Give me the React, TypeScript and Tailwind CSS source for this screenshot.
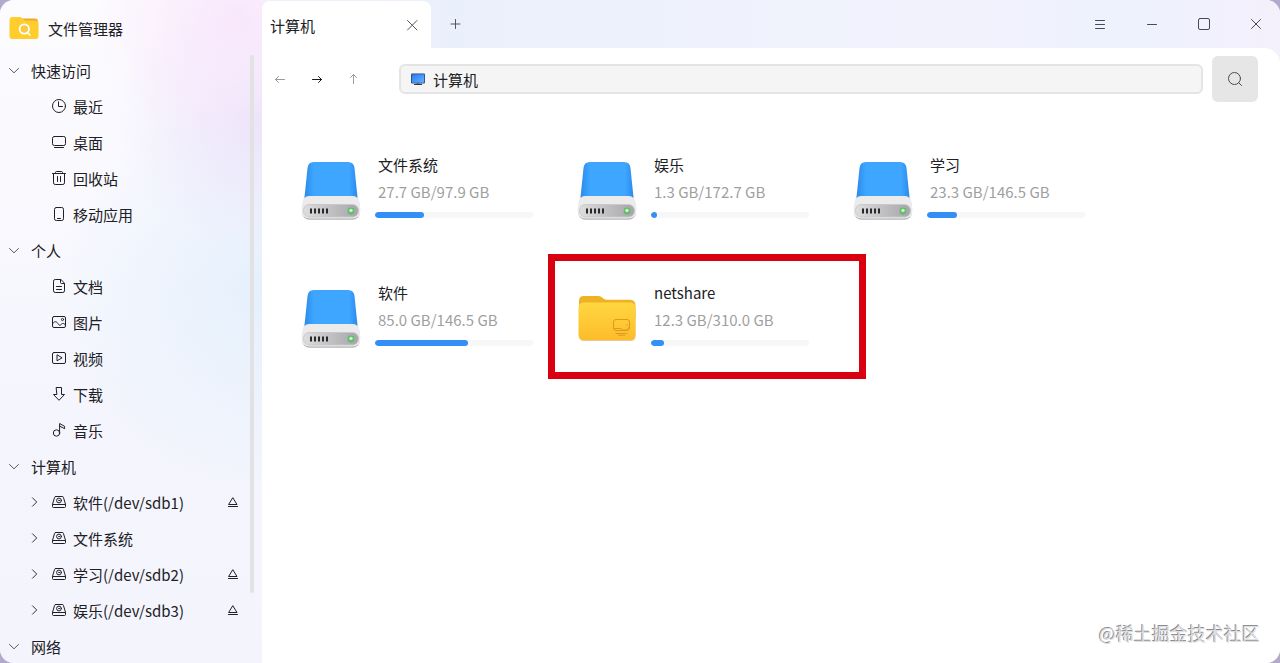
import React from "react";

function Glyph({ children, className = "" }: { children: React.ReactNode; className?: string }) {
  return (
    <svg
      aria-hidden="true"
      viewBox="0 0 16 16"
      className={`size-4 shrink-0 ${className}`}
      fill="none"
      stroke="currentColor"
      strokeWidth="1"
      strokeLinecap="round"
      strokeLinejoin="round"
    >
      {children}
    </svg>
  );
}

const ChevronDown = () => (
  <Glyph className="text-[#5c5c66]">
    <path d="M3.5 6.5 8 10.8 12.5 6.5" />
  </Glyph>
);
const ChevronRight = () => (
  <Glyph className="text-[#33333b]">
    <path d="M6.5 3.8 10.7 8 6.5 12.2" />
  </Glyph>
);
const Clock = () => (
  <Glyph>
    <circle cx="8" cy="8" r="6.5" />
    <path d="M7.5 3.8V8.5H11.5" />
  </Glyph>
);
const Desktop = () => (
  <Glyph>
    <rect x="1.5" y="2.5" width="13" height="9" rx="1.8" />
    <path d="M3.5 13.5h9" />
  </Glyph>
);
const Trash = () => (
  <Glyph>
    <path d="M1.5 3.5h13M4.5 3.5v-1a1 1 0 0 1 1-1h5a1 1 0 0 1 1 1v1M2.5 3.5v9.3a1.7 1.7 0 0 0 1.7 1.7h7.6a1.7 1.7 0 0 0 1.7-1.7V3.5M6.5 6.5v5M9.5 6.5v5" />
  </Glyph>
);
const Phone = () => (
  <Glyph>
    <rect x="3.5" y="1.5" width="9" height="13" rx="1.8" />
    <path d="M6.5 12.5h3" />
  </Glyph>
);
const Doc = () => (
  <Glyph>
    <path d="M9.5 1.5H4.2a1.7 1.7 0 0 0-1.7 1.7v9.6a1.7 1.7 0 0 0 1.7 1.7h7.6a1.7 1.7 0 0 0 1.7-1.7V5.5ZM9.5 1.8v2.7a1 1 0 0 0 1 1h2.7M5.5 8.5h5M5.5 11.5h5" />
  </Glyph>
);
const Picture = () => (
  <Glyph>
    <rect x="1.5" y="2.5" width="13" height="11" rx="1.5" />
    <circle cx="11.5" cy="5.5" r="1.1" />
    <path d="M1.8 9.5C3.5 7 5.3 7.2 6.8 9.4s2 2.3 3.2 1.2 2.8-2.2 4.3.4" />
  </Glyph>
);
const Video = () => (
  <Glyph>
    <rect x="1.5" y="2.5" width="13" height="11" rx="1.5" />
    <path d="M6 5.2v5.600L10.8 8Z" />
  </Glyph>
);
const Download = () => (
  <Glyph>
    <path d="M5.5 1.5h5v7h3L8 14.3 2.5 8.5h3Z" />
  </Glyph>
);
const Music = () => (
  <Glyph>
    <circle cx="5.5" cy="11" r="3.2" />
    <path d="M8.6 11V1.5l5 2.8v2.4l-5-2.6" />
  </Glyph>
);
const Disk = () => (
  <Glyph>
    <path d="M4.6 2.5h6.8a1 1 0 0 1 1 .8l2.100 7v2.2a1 1 0 0 1-1 1h-11a1 1 0 0 1-1-1v-2.2l2.100-7a1 1 0 0 1 1-.8ZM1.8 10.5h12.4" />
    <circle cx="8" cy="6.5" r="2.4" />
    <circle cx="8" cy="6.5" r=".3" />
  </Glyph>
);
const Eject = () => (
  <Glyph>
    <path d="M8 4 12 10.5H4ZM3.5 12.5h9" />
  </Glyph>
);

function AppLogo() {
  return (
    <svg aria-hidden="true" viewBox="0 0 30 24" className="h-6 w-[30px] shrink-0">
      <path d="M10 2.5h16a3 3 0 0 1 3 3V12H8Z" fill="#eda92e" />
      <path d="M.5 4a3 3 0 0 1 3-3h7c1.5 0 2 .5 3 1.6 1.5 1.6 2 2 4 2h9a3 3 0 0 1 3 3V20a3 3 0 0 1-3 3h-23a3 3 0 0 1-3-3Z" fill="#ffcd2c" />
      <circle cx="15.3" cy="13" r="4.7" fill="#fbc93f" stroke="#fff" strokeWidth="1.8" />
      <path d="m18.5 16.5 2.3 2.5" stroke="#fff" strokeWidth="1.8" strokeLinecap="round" />
    </svg>
  );
}

function DriveArt() {
  return (
    <svg aria-hidden="true" viewBox="0 0 60 60" className="size-[60px] shrink-0">
      <defs>
        <linearGradient id="drive-top" x1="0" x2="1" y1="0" y2="0">
          <stop offset="0" stopColor="#2a8ae8" />
          <stop offset=".08" stopColor="#3297f5" />
          <stop offset=".18" stopColor="#3fa6ff" />
          <stop offset=".84" stopColor="#3fa6ff" />
          <stop offset=".93" stopColor="#3297f5" />
          <stop offset="1" stopColor="#2a8ae8" />
        </linearGradient>
        <linearGradient id="drive-front" x1="0" x2="1" y1="0" y2="0">
          <stop offset="0" stopColor="#dededf" />
          <stop offset=".45" stopColor="#c3c3c5" />
          <stop offset="1" stopColor="#a5a6aa" />
        </linearGradient>
      </defs>
      <rect x="1" y="44" width="58" height="15.8" rx="7.5" fill="#b4b4b6" />
      <path d="M5.5 20 3 37Q.5 44 .5 50q0 8.5 8.5 8.5h42q8.500 0 8.500-8.500 0-6-2.500-13L54.500 20Z" fill="#ebebec" />
      <path d="M6.500 8Q7 2 13 2h34q6 0 6.500 6L56.500 38q-1.500-2-4.500-2H8q-3 0-4.500 2Z" fill="url(#drive-top)" />
      <rect x="2.500" y="44.500" width="55" height="12.500" rx="6" fill="url(#drive-front)" stroke="#c9c9cb" />
      <path d="M10 48.500v5M14 48.500v5M18 48.500v5M22 48.500v5M26 48.500v5" stroke="#29292b" strokeWidth="2" />
      <circle cx="50" cy="51" r="3.400" fill="#62b968" />
      <circle cx="50" cy="50.500" r="1.800" fill="#c4f9bf" />
    </svg>
  );
}

function FolderArt() {
  return (
    <svg aria-hidden="true" viewBox="0 0 60 60" className="size-[60px] shrink-0">
      <defs>
        <linearGradient id="folder-face" x1="0" x2="0" y1="0" y2="1">
          <stop offset="0" stopColor="#ffd740" />
          <stop offset="1" stopColor="#fdbc2b" />
        </linearGradient>
      </defs>
      <path d="M2 13Q2 8 7 8h14.500c3.500 0 4.500 3.700 8 3.700H53q5.500 0 5.500 6V30H2Z" fill="#efb125" />
      <rect x="2" y="20" width="56.500" height="33" rx="4.500" fill="#c9923a" opacity=".5" />
      <rect x="1.500" y="14.500" width="57" height="37.500" rx="5" fill="url(#folder-face)" />
      <g fill="none" stroke="#dd9a1c" strokeWidth="1">
        <rect x="36.500" y="31.500" width="16" height="11" rx="2.500" />
        <path d="M37 40.500h7l1.500 1.500h4l3-3M49.500 37h1.500M38.500 45.500h12M41 47.200h7" />
      </g>
    </svg>
  );
}

function MonitorArt() {
  return (
    <svg aria-hidden="true" viewBox="0 0 16 16" className="size-4 shrink-0">
      <defs>
        <linearGradient id="monitor-face" x1="0" x2="1" y1="0" y2="1">
          <stop offset="0" stopColor="#2878f5" />
          <stop offset="1" stopColor="#63b4ff" />
        </linearGradient>
      </defs>
      <rect x="1" y="2.500" width="14" height="10" rx="1" fill="#28466f" />
      <rect x="1.800" y="3.300" width="12.400" height="8.400" fill="url(#monitor-face)" />
      <path d="M6.500 12.500h3v.6H12v1H4v-1h2.500Z" fill="#32343b" />
    </svg>
  );
}

type Item = { label: string; Icon: React.ComponentType; drive?: boolean; eject?: boolean };
const groups: { label: string; items: Item[] }[] = [
  {
    label: "快速访问",
    items: [
      { label: "最近", Icon: Clock },
      { label: "桌面", Icon: Desktop },
      { label: "回收站", Icon: Trash },
      { label: "移动应用", Icon: Phone },
    ],
  },
  {
    label: "个人",
    items: [
      { label: "文档", Icon: Doc },
      { label: "图片", Icon: Picture },
      { label: "视频", Icon: Video },
      { label: "下载", Icon: Download },
      { label: "音乐", Icon: Music },
    ],
  },
  {
    label: "计算机",
    items: [
      { label: "软件(/dev/sdb1)", Icon: Disk, drive: true, eject: true },
      { label: "文件系统", Icon: Disk, drive: true },
      { label: "学习(/dev/sdb2)", Icon: Disk, drive: true, eject: true },
      { label: "娱乐(/dev/sdb3)", Icon: Disk, drive: true, eject: true },
    ],
  },
  { label: "网络", items: [] },
];

function Sidebar() {
  return (
    <aside className="flex w-[262px] shrink-0 flex-col overflow-hidden bg-[radial-gradient(ellipse_140px_130px_at_235px_20px,#f9e7fc_0%,#f9e7fc00_100%),radial-gradient(ellipse_150px_130px_at_262px_120px,#ebe3fa_0%,#ebe3fa00_100%),radial-gradient(ellipse_200px_200px_at_262px_290px,#e5f0fc_0%,#e5f0fc00_100%),linear-gradient(to_bottom,#fcfbfe_0%,#f9f9fe_30%,#f4f5fd_60%,#f4f4fd_100%)]">
      <div className="flex h-[52px] shrink-0 items-center gap-[9px] pt-1 pl-[9px]">
        <AppLogo />
        <h1 className="pt-0.5">文件管理器</h1>
      </div>
      <div className="relative min-h-0 flex-1 overflow-hidden">
        <nav aria-label="位置">
          {groups.map((group) => (
            <section key={group.label}>
              <button type="button" className="flex h-9 w-full items-center gap-[9px] pl-1.5 text-left">
                <ChevronDown />
                <span className="pt-0.5">{group.label}</span>
              </button>
              <ul>
                {group.items.map(({ label, Icon, drive, eject }) => (
                  <li key={label} className="flex h-9 items-center pr-[21px] pl-[26px]">
                    <span className="flex w-[25px] shrink-0">
                      {drive && (
                        <button type="button" aria-label={`展开 ${label}`}>
                          <ChevronRight />
                        </button>
                      )}
                    </span>
                    <a href="#" className="flex flex-1 items-center gap-1.5">
                      <Icon />
                      <span className="pt-0.5">{label}</span>
                    </a>
                    {eject && (
                      <button type="button" aria-label={`弹出 ${label}`}>
                        <Eject />
                      </button>
                    )}
                  </li>
                ))}
              </ul>
            </section>
          ))}
        </nav>
        <div className="absolute top-[3px] right-2 bottom-[70px] w-1 rounded-full bg-[#e2e2e5]" />
      </div>
    </aside>
  );
}

function TitleBar() {
  return (
    <header className="flex h-12 shrink-0 justify-between bg-[linear-gradient(to_right,#f3effc_0%,#eaf0fb_18%,#eff2fc_45%,#f2f2fd_70%,#edf2fd_85%,#f4f0fc_100%)]">
      <div className="flex">
        <div className="mt-px flex w-[169px] items-center justify-between rounded-t-lg bg-white pr-[11px] pl-2">
          <span className="pt-0.5">计算机</span>
          <button type="button" aria-label="关闭标签页" className="text-[#55555c]">
            <Glyph>
              <path d="m3.500 3.500 9.500 9.500M13 3.500 3.500 13" />
            </Glyph>
          </button>
        </div>
        <button type="button" aria-label="新建标签页" className="px-4 text-[#55555c]">
          <Glyph>
            <path d="M8.500 3.500v9M4 8h9" />
          </Glyph>
        </button>
      </div>
      <div className="flex items-center gap-9 pr-4 text-[#4a4a55]">
        <button type="button" aria-label="菜单">
          <Glyph>
            <path d="M3.500 4.500h9M3.500 8.500h9M3.500 12.500h9" />
          </Glyph>
        </button>
        <button type="button" aria-label="最小化">
          <Glyph>
            <path d="M3.500 8.500h9" />
          </Glyph>
        </button>
        <button type="button" aria-label="最大化">
          <Glyph>
            <rect x="2.500" y="2.500" width="11" height="11" rx="1.500" />
          </Glyph>
        </button>
        <button type="button" aria-label="关闭">
          <Glyph>
            <path d="m3.500 3.500 9 9M12.500 3.500l-9 9" />
          </Glyph>
        </button>
      </div>
    </header>
  );
}

function Toolbar() {
  return (
    <div className="flex items-center pt-2 pr-[22px] pl-[10px]">
      <div className="flex w-[127px] shrink-0 items-center gap-[21px]">
        <button type="button" aria-label="后退" className="text-[#9a9a9e]">
          <Glyph>
            <path d="M12.500 8.500h-9M6.500 5.500l-3 3 3 3" />
          </Glyph>
        </button>
        <button type="button" aria-label="前进" className="text-[#17171a]">
          <Glyph>
            <path d="M3.500 8.500h9M9.500 5.500l3 3-3 3" />
          </Glyph>
        </button>
        <button type="button" aria-label="上一级" className="text-[#9a9a9e]">
          <Glyph>
            <path d="M7.500 12.500v-9M4.500 6.500l3-3 3 3" />
          </Glyph>
        </button>
      </div>
      <label className="flex h-[30px] flex-1 items-center gap-[7px] rounded-md border-2 border-[#e4e4e4] bg-[#f5f5f5] px-[9px]">
        <MonitorArt />
        <input
          type="text"
          aria-label="地址"
          defaultValue="计算机"
          className="h-[26px] w-full min-w-0 flex-1 bg-transparent outline-none"
        />
      </label>
      <button
        type="button"
        aria-label="搜索"
        className="ml-[9px] flex size-[46px] shrink-0 items-center justify-center rounded-md bg-[#e6e6e6] text-[#4a4a52]"
      >
        <Glyph>
          <circle cx="7.500" cy="7.500" r="6" />
          <path d="m12 12 2.500 2.500" />
        </Glyph>
      </button>
    </div>
  );
}

const volumes = [
  { name: "文件系统", usage: "27.7 GB/97.9 GB", percent: 31 },
  { name: "娱乐", usage: "1.3 GB/172.7 GB", percent: 4 },
  { name: "学习", usage: "23.3 GB/146.5 GB", percent: 19 },
  { name: "软件", usage: "85.0 GB/146.5 GB", percent: 59 },
  { name: "netshare", usage: "12.3 GB/310.0 GB", percent: 8, share: true },
];

function Volumes() {
  return (
    <ul className="grid grid-cols-[repeat(auto-fill,276px)] pt-6 pr-16 pl-[14px]">
      {volumes.map((v) => (
        <li key={v.name} className="relative flex h-32 items-center gap-[14px] pl-[25px]">
          {v.share ? <FolderArt /> : <DriveArt />}
          <div className="w-[158px] pb-[11px]">
            <div className="pl-[3px] leading-7">{v.name}</div>
            <div className="pl-[3px] leading-[26px] text-[#9f9f9f]">{v.usage}</div>
            <div
              role="progressbar"
              aria-label={v.name}
              aria-valuenow={v.percent}
              className="mt-[7px] h-1.5 overflow-hidden rounded-full bg-[#f7f7f7]"
            >
              <div className="h-full rounded-full bg-[#338ff5]" style={{ width: `${v.percent}%` }} />
            </div>
          </div>
          {v.share && (
            <div className="pointer-events-none absolute top-0 -right-[38px] bottom-[3px] -left-1 border-7 border-[#d9000f]" />
          )}
        </li>
      ))}
    </ul>
  );
}

export default function App() {
  return (
    <div className="h-screen overflow-hidden bg-[#b3aacb] font-['Noto_Sans_CJK_SC',sans-serif] text-[15px] leading-6 text-[#202024]">
      <div className="relative flex h-full overflow-hidden rounded-[14px] bg-[#f4f1fd]">
        <Sidebar />
        <div className="flex min-w-0 flex-1 flex-col">
          <TitleBar />
          <main className="flex-1 rounded-tr-2xl bg-white">
            <Toolbar />
            <Volumes />
          </main>
        </div>
        <div className="absolute right-5 bottom-4 text-[18px] leading-7 text-[#dedede] [text-shadow:-1px_-1px_0_#8e8e92]">
          @稀土掘金技术社区
        </div>
      </div>
    </div>
  );
}
